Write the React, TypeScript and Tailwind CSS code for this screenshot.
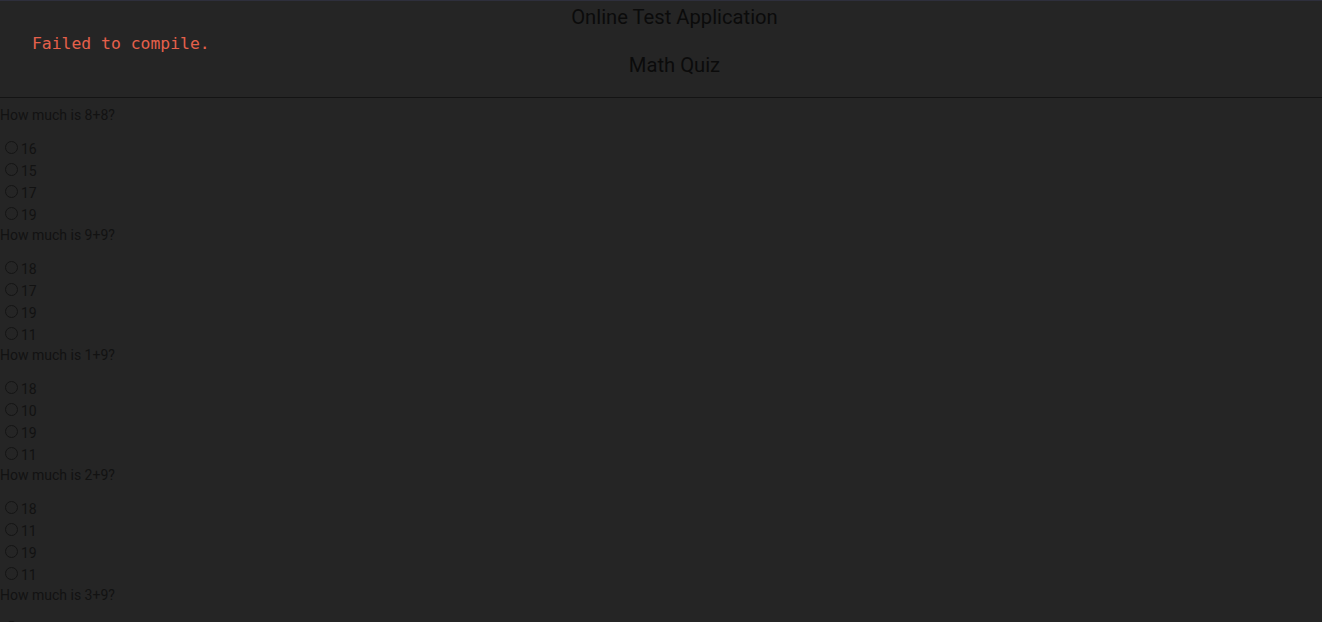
import React from "react";

const questions = [
  { q: "How much is 8+8?", opts: ["16", "15", "17", "19"] },
  { q: "How much is 9+9?", opts: ["18", "17", "19", "11"] },
  { q: "How much is 1+9?", opts: ["18", "10", "19", "11"] },
  { q: "How much is 2+9?", opts: ["18", "11", "19", "11"] },
  { q: "How much is 3+9?", opts: ["12", "11", "19", "13"] },
];

export default function App() {
  return (
    <div className="min-h-[622px] bg-[#252525] text-[#121212] [font-family:Roboto,'Noto_Sans',sans-serif] relative">
      <div className="h-px bg-[#2e2f3c]" />
      <header className="h-[97px] border-b border-[#141414] flex flex-col items-center pl-[27px] text-[#0b0b0b]">
        <h1 className="text-[20.2px] leading-[24px] mt-[4px]">Online Test Application</h1>
        <h2 className="text-[20.2px] leading-[24px] mt-[24px]">Math Quiz</h2>
      </header>
      <div className="absolute left-[32px] top-[33px] text-[16.4px] leading-[22px] text-[#e5604b] [font-family:'DejaVu_Sans_Mono',monospace]">
        Failed to compile.
      </div>
      <main className="pt-[7px]">
        {questions.map((item, i) => (
          <div key={i} className="h-[120px]">
            <div className="text-[14px] leading-[20px]">{item.q}</div>
            <div className="mt-[12px]">
              {item.opts.map((o, j) => (
                <label key={j} className="flex items-center h-[22px] text-[14px]">
                  <span className="ml-[5px] mr-[3px] mt-[-1px] w-[13px] h-[13px] rounded-full border border-[#141414]" />
                  <span className="leading-[22px] pt-[1px]">{o}</span>
                </label>
              ))}
            </div>
          </div>
        ))}
      </main>
    </div>
  );
}
